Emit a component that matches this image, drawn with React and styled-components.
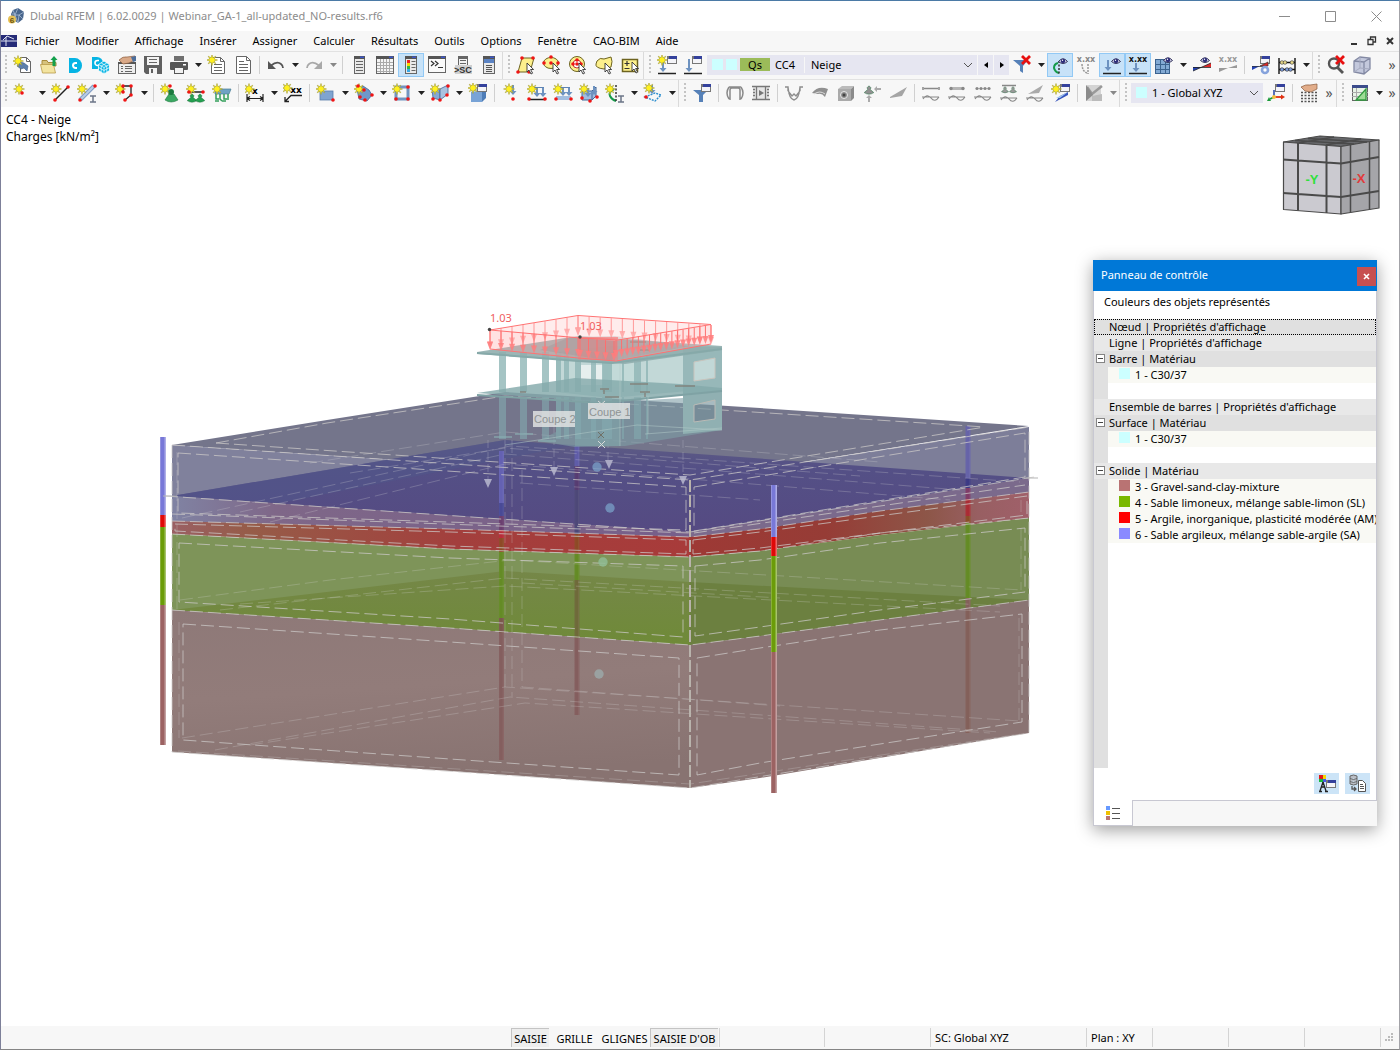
import React, { useState } from "react";
import styled, { createGlobalStyle, css } from "styled-components";

/* ---------- icon parts ---------- */

const Star = ({ x = 5, y = 6 }) => (
  <path
    transform={`translate(${x} ${y})`}
    d="M0-5.500L1-2.200 3.800-3.800 2.200-1 5.500 0 2.200 1 3.800 3.800 1 2.200 0 5.500-1 2.200-3.800 3.800-2.200 1-5.500 0-2.200-1-3.800-3.800-1-2.200z"
    fill="#fff01e"
    stroke="#a39c3c"
    strokeWidth=".6"
  />
);

const Dots = ({ at }) => at.map(([x, y]) => <circle key={`${x}-${y}`} cx={x} cy={y} r="1.8" fill="#f01414" />);

const MiniWindow = ({ x = 10, y = 2 }) => (
  <g>
    <rect x={x + 0.5} y={y + 0.5} width="9" height="7" fill="#f4f4f8" stroke="#777" />
    <rect x={x} y={y} width="10" height="3" fill="#34419c" />
    <rect x={x} y={y} width="2" height="3" fill="#777" />
  </g>
);

const Cursor = ({ x = 11, y = 8 }) => (
  <path transform={`translate(${x} ${y})`} d="M0 0v9l2-2 2 4 1.600-.8-2-3.700h3z" fill="#fff" stroke="#333" strokeWidth=".9" />
);

const Eye = ({ x = 12, y = 5 }) => (
  <g transform={`translate(${x} ${y})`}>
    <path d="M-4.500 .5Q0-5 4.500 .5 0 4.500-4.500 .5z" fill="#c9c9e0" stroke="#33335c" />
    <circle r="2.200" cy="-.1" fill="#2c2c78" />
    <circle r=".7" cy="-.8" cx="-.5" fill="#fff" />
  </g>
);

const RedCross = ({ x = 13, y = 5 }) => (
  <path transform={`translate(${x} ${y})`} d="M-4-4L4 4M4-4L-4 4" stroke="#e81010" strokeWidth="2.800" />
);

const DownArrow = ({ x, y = 3, h = 11, color = "#6d92c0" }) => (
  <path d={`M${x - 1} ${y}h2v${h - 4}h2.500l-3.500 4-3.500-4h2.500z`} fill={color} />
);

const Xxx = ({ color = "#111" }) => (
  <text x="10" y="7" textAnchor="middle" fontSize="8" fontWeight="700" fontFamily="DejaVu Sans, sans-serif" fill={color}>
    x.xx
  </text>
);

const ISection = ({ x = 14, y = 12 }) => <path d={`M${x} ${y}h6M${x} ${y + 6}h6M${x + 3} ${y}v6`} stroke="#6c7688" strokeWidth="1.500" />;

const Wave = ({ y = 15 }) => (
  <path d={`M1 ${y}h17M2 ${y + 2}q4-6 8-1t8-1`} fill="none" stroke="#888" strokeWidth="1.200" />
);

const Support = ({ x, y, s = 1, color = "#24a050" }) => (
  <path transform={`translate(${x} ${y}) scale(${s})`} d="M0-4l2.500 2.500-1 2 4.500 4q-6 4-12 0l4.500-4-1-2z" fill={color} stroke="#1a6b38" strokeWidth=".6" />
);

const ListWindow = ({ x = 5, w = 11, children }) => (
  <g>
    <rect x={x + 0.5} y="1.500" width={w - 1} height="17" fill="#e9e9e9" stroke="#666" />
    <rect x={x} y="1" width={w} height="3" fill="#555" />
    <rect x={x + w - 5} y="1.500" width="4" height="1.500" fill="#3a55c8" />
    {children || <path d={`M${x + 2} 6.500h${w - 4}M${x + 2} 9.500h${w - 4}M${x + 2} 12.500h${w - 4}M${x + 2} 15.500h${w - 4}`} stroke="#666" />}
  </g>
);

const ICONS = {
  newModel: (
    <>
      <path d="M7.500 2.500h6l4 4v11h-10z" fill="#fff" stroke="#666" />
      <path d="M13.500 2.500v4h4" fill="none" stroke="#666" />
      <path d="M4 11q3-5 7-3l4 3-1 5-3-3-3 1z" fill="#5d80ab" stroke="#3f5c84" strokeWidth=".6" />
      <Star />
    </>
  ),
  open: (
    <>
      <path d="M3 5.500h5l1 2h8V11H3z" fill="#d6c27c" stroke="#a98c3c" />
      <path d="M1.500 9.500h13l2 8.500H3.500z" fill="#f3e4a0" stroke="#b79b49" strokeWidth=".8" />
      <path d="M15 1l3.500 4h-2v6h-3V5h-2z" fill="#12a04c" />
    </>
  ),
  dlubal: (
    <>
      <path d="M4 3h6a7 7.500 0 0 1 0 15H4z" fill="#06b4e4" />
      <path d="M12 8h-1.500a2.500 2.500 0 0 0 0 5H12" fill="none" stroke="#fff" strokeWidth="2" />
    </>
  ),
  dlubalBlocks: (
    <>
      <path d="M1 2h5a6 6 0 0 1 0 12H1z" fill="#06b4e4" />
      <path d="M8 5.500H6.500a2.500 2.500 0 0 0 0 5H8" fill="none" stroke="#fff" strokeWidth="1.600" />
      <path d="M13 6l5.500 3.500v6L13 19l-5.500-3.500v-6z" fill="#06b4e4" stroke="#fff" strokeWidth=".8" />
      <path d="M7.500 9.500l5.500 3 5.500-3M13 12.500V19M10.200 8l5.600 3v6M15.800 8l-5.600 3v6M7.500 12.500l5.500 3 5.500-3" fill="none" stroke="#fff" strokeWidth=".7" />
    </>
  ),
  properties: (
    <>
      <rect x="1.500" y="7.500" width="17" height="11" fill="#eee" stroke="#666" />
      <rect x="1" y="7" width="18" height="2" fill="#555" />
      <path d="M4 11.500h2M8 11.500h7M4 13.500h2M8 13.500h7M4 16.500h2M8 16.500h7" stroke="#666" />
      <path d="M2 5q4-4 8-3l8-1v4l-6 3-6 1z" fill="#d9a988" stroke="#8a5b3d" strokeWidth=".7" />
      <path d="M14 2l5-1v5l-3 1z" fill="#4d6f9c" />
    </>
  ),
  save: (
    <>
      <path d="M1 1h18v18H3l-2-2z" fill="#606060" />
      <rect x="4" y="2" width="12" height="8" fill="#f3f3f3" />
      <path d="M6 4.500h8M6 7.500h8" stroke="#666" />
      <rect x="6" y="13" width="8" height="6" fill="#f3f3f3" />
      <rect x="8" y="14" width="2" height="4" fill="#606060" />
    </>
  ),
  print: (
    <>
      <rect x="5" y="1" width="10" height="5" fill="#707070" />
      <rect x="1" y="7" width="18" height="8" rx="1" fill="#565656" />
      <rect x="14" y="9" width="3" height="1.500" fill="#fff" />
      <rect x="5.500" y="12.500" width="9" height="6" fill="#f2f2f2" stroke="#565656" />
    </>
  ),
  newReport: (
    <>
      <path d="M4.500 2.500h9l4 4v12h-13z" fill="#fff" stroke="#666" />
      <path d="M13.500 2.500v4h4M7 9.500h8M7 12.500h8M7 15.500h8" fill="none" stroke="#666" />
      <Star y={5} />
    </>
  ),
  report: (
    <>
      <path d="M3.500 1.500h10l4 4v13h-14z" fill="#fff" stroke="#666" />
      <path d="M13.500 1.500v4h4M6 6.500h5M6 9.500h9M6 12.500h9M6 15.500h9" fill="none" stroke="#666" />
    </>
  ),
  undo: (
    <>
      <path d="M2 6v8h8z" fill="#555" />
      <path d="M5 10.500q6-5 10-1.500 2 1.500 2 4" fill="none" stroke="#555" strokeWidth="1.800" />
    </>
  ),
  redo: (
    <>
      <path d="M18 6v8h-8z" fill="#a9a9a9" />
      <path d="M15 10.500q-6-5-10-1.500-2 1.500-2 4" fill="none" stroke="#a9a9a9" strokeWidth="1.800" />
    </>
  ),
  navigator: <ListWindow />,
  tables: (
    <>
      <rect x="1.500" y="2.500" width="17" height="16" fill="#f5f5f5" stroke="#666" />
      <rect x="1" y="1" width="18" height="3" fill="#555" />
      <rect x="14" y="1.500" width="4" height="1.500" fill="#3a55c8" />
      <path d="M2 7.500h16M2 10.500h16M2 13.500h16M2 16.500h16M5.500 4v14M8.500 4v14M11.500 4v14M14.500 4v14" stroke="#aaa" />
    </>
  ),
  controlPanel: (
    <ListWindow x={4} w={12}>
      <rect x="6" y="5" width="3" height="3" fill="#e22" />
      <rect x="6" y="8" width="3" height="3" fill="#f5d800" />
      <rect x="6" y="11" width="3" height="3" fill="#2fb84a" />
      <rect x="6" y="14" width="3" height="3" fill="#38a9e8" />
      <path d="M10.500 6.500h4M10.500 9.500h4M10.500 12.500h4M10.500 15.500h4" stroke="#666" />
    </ListWindow>
  ),
  console: (
    <>
      <rect x="1.500" y="1.500" width="17" height="16" fill="#fafafa" stroke="#666" />
      <rect x="1" y="1" width="18" height="3" fill="#555" />
      <rect x="14" y="1.500" width="4" height="1.500" fill="#3a55c8" />
      <path d="M4 6l3 2.500-3 2.500M8 6l3 2.500-3 2.500M11 12.500h5" fill="none" stroke="#333" strokeWidth="1.200" />
    </>
  ),
  script: (
    <>
      <path d="M5.500 1.500h9v10h-9z" fill="#f2f2f2" stroke="#666" />
      <path d="M5 1h10v3H5z" fill="#666" />
      <path d="M7 5.500h6M7 8.500h6" stroke="#666" />
      <rect x="2" y="10" width="17" height="9" fill="#d0d0d0" />
      <text x="10" y="18" textAnchor="middle" fontSize="9" fontWeight="700" fontFamily="Liberation Sans, sans-serif" fill="#333">
        &gt;SC
      </text>
    </>
  ),
  manager: (
    <ListWindow x={4} w={12}>
      <rect x="5" y="4" width="10" height="4" fill="#5b83c4" />
      <path d="M7 10.500h6M7 12.500h6M7 14.500h6M7 16.500h6" stroke="#555" />
    </ListWindow>
  ),
  selectQuad: (
    <>
      <path d="M6 3h12l-4 14H2z" fill="#fdf08c" stroke="#6d6320" />
      <Dots at={[[6, 3], [17, 3], [2, 17], [13, 17]]} />
      <Cursor />
    </>
  ),
  selectEllipse: (
    <>
      <ellipse cx="9" cy="8" rx="7.500" ry="5.500" fill="#fdf08c" stroke="#6d6320" />
      <Dots at={[[9, 2], [2, 8], [16, 8], [9, 8]]} />
      <Cursor />
    </>
  ),
  selectRing: (
    <>
      <circle cx="9" cy="9" r="7.500" fill="#fdf08c" stroke="#6d6320" />
      <circle cx="9" cy="9" r="4" fill="#fff" stroke="#b33" />
      <Dots at={[[9, 9], [5, 9], [13, 9], [9, 5]]} />
      <Cursor />
    </>
  ),
  selectLasso: (
    <>
      <path d="M3 6q3-4 7-2l7-2q2 4 0 10l-7 2Q1 13 2 9z" fill="#fdf08c" stroke="#6d6320" />
      <Cursor />
    </>
  ),
  selectPlus: (
    <>
      <rect x="2.500" y="4.500" width="15" height="12" fill="#fdf08c" stroke="#6d6320" strokeWidth="1.500" />
      <path d="M4.500 8.500h5M7 6v5M4.500 13.500h5" stroke="#333" strokeWidth="1.200" />
      <Cursor x={12} y={7} />
    </>
  ),
  newLoad: (
    <>
      <DownArrow x={6} y={5} h={12} />
      <path d="M1 18.500h18" stroke="#222" strokeWidth="1.500" />
      <Star y={5} />
      <MiniWindow x={10} y={1} />
    </>
  ),
  editLoad: (
    <>
      <DownArrow x={6} y={4} h={13} />
      <path d="M1 18.500h18" stroke="#222" strokeWidth="1.500" />
      <MiniWindow x={9} y={1} />
    </>
  ),
  filterOff: (
    <>
      <path d="M1 5h15l-5 6v7l-3-2v-5z" fill="#5681b8" />
      <RedCross x={14} y={5} />
    </>
  ),
  viewSupports: (
    <>
      <path d="M8 8Q4 9 4 13q1 4 5 5" fill="none" stroke="#159a4a" strokeWidth="2" />
      <path d="M9 6v13" stroke="#333" strokeDasharray="2 1.500" strokeWidth="1.500" />
      <Eye x={13} y={6} />
    </>
  ),
  valuesSupports: (
    <>
      <Xxx color="#888" />
      <path d="M6 9q0 7 5 9M12 9v10" fill="none" stroke="#999" strokeWidth="1.500" strokeDasharray="2 1" />
    </>
  ),
  viewLoads: (
    <>
      <DownArrow x={6} y={5} h={11} />
      <path d="M1 18.500h18" stroke="#222" strokeWidth="1.500" />
      <Eye x={14} y={6} />
    </>
  ),
  valuesLoads: (
    <>
      <Xxx />
      <DownArrow x={8} y={8} h={9} />
      <path d="M1 18.500h18" stroke="#222" strokeWidth="1.500" />
    </>
  ),
  viewMesh: (
    <>
      <rect x="1.500" y="4.500" width="14" height="14" fill="#83aad4" stroke="#3c638f" />
      <path d="M6.500 4.500v14M11.500 4.500v14M1.500 9.500h14M1.500 14.500h14" stroke="#3c638f" />
      <Eye x={14} y={5} />
    </>
  ),
  viewResults: (
    <>
      <path d="M1 16l9-4H1z" fill="#2342b5" />
      <path d="M19 8v4h-9z" fill="#e02828" />
      <path d="M1 16L19 8M1 12.500h18" stroke="#222" strokeWidth=".8" />
      <Eye x={13} y={5} />
    </>
  ),
  valuesResults: (
    <>
      <Xxx color="#999" />
      <path d="M1 17l9-4H1zM19 10v3h-9z" fill="#999" />
    </>
  ),
  resultsSettings: (
    <>
      <MiniWindow x={9} y={1} />
      <path d="M1 15v-4h8z" fill="#2342b5" />
      <path d="M1 11.500h11M9 11l8-4v4z" fill="#e02828" stroke="#333" strokeWidth=".7" />
      <circle cx="14" cy="15" r="3" fill="#fff" stroke="#86a3dc" strokeWidth="2.600" />
    </>
  ),
  abacus: (
    <>
      <path d="M2 3v16M18 3v16M2 7.500h16M2 14.500h16" stroke="#111" strokeWidth="1.400" />
      <g fill="#e8d98a" stroke="#333" strokeWidth=".6">
        <circle cx="5" cy="7.500" r="1.800" /><circle cx="8" cy="7.500" r="1.800" /><circle cx="15" cy="7.500" r="1.800" />
      </g>
      <g fill="#7f9fe0" stroke="#222" strokeWidth=".6">
        <circle cx="5" cy="14.500" r="1.800" /><circle cx="10" cy="14.500" r="1.800" /><circle cx="13.500" cy="14.500" r="1.800" />
      </g>
    </>
  ),
  zoomOff: (
    <>
      <circle cx="8" cy="8.500" r="5" fill="none" stroke="#555" strokeWidth="2.400" />
      <path d="M11 12l6 6" stroke="#555" strokeWidth="2.800" />
      <RedCross x={14} y={5} />
    </>
  ),
  cubeView: (
    <>
      <path d="M2 6l6-4 10 1v11l-6 5-10-2z" fill="#c3c8dc" />
      <path d="M2 6l10 1 6-4M12 7v12M2 6l6-4 10 1v11l-6 5-10-2z" fill="none" stroke="#8389a3" strokeWidth="1.300" />
      <path d="M8 2v11l10 1M8 13l-6 4" fill="none" stroke="#a4a9bf" />
    </>
  ),

  node: (<><Star x={6} y={6} /><Dots at={[[9, 10]]} /></>),
  line: (<><path d="M4 17L17 4" stroke="#222" strokeWidth="1.500" /><Star /><Dots at={[[4, 17], [17, 4]]} /></>),
  member: (
    <>
      <path d="M3 17L17 3" stroke="#7f9cc4" strokeWidth="4" />
      <path d="M3 17L17 3" stroke="#b9cde6" strokeWidth="2" />
      <Star /><Dots at={[[3, 17], [18, 3]]} /><ISection x={13} y={13} />
    </>
  ),
  polyline: (<><path d="M8 9V3h8v9l-6 5" fill="none" stroke="#222" strokeWidth="1.300" /><Star /><Dots at={[[8, 3], [16, 3], [8, 9], [16, 12], [10, 17]]} /></>),
  nodeSupport: (<><path d="M9 11h5l4 6q-7 4-13 0z" fill="#3aa862" stroke="#1e7a42" strokeWidth=".6" /><circle cx="11" cy="9" r="3" fill="#1b7a3e" /><Star /><Dots at={[[10, 3]]} /></>),
  lineSupport: (<><path d="M3 9h14" stroke="#222" strokeWidth="1.500" /><Support x={6} y={14} s={0.8} /><Support x={14} y={14} s={0.8} /><Star /><Dots at={[[3, 9], [17, 9]]} /></>),
  surfaceSupport: (
    <>
      <path d="M3 9l5-3h11l-2 5H3z" fill="#6fa3c5" stroke="#4b7f96" strokeWidth=".7" />
      <path d="M4 11v5h3M8 11v5l2 2M12 11v5h3M16 11v6M3 18h4M10 18h4" stroke="#35a05c" strokeWidth="1.500" fill="none" />
      <Star />
    </>
  ),
  dimension: (
    <>
      <path d="M2 11v8M18 11v8M2 15.500h16M2 15.500l3-2M2 15.500l3 2M18 15.500l-3-2M18 15.500l-3 2" stroke="#222" strokeWidth="1.200" />
      <text x="10" y="11" textAnchor="middle" fontSize="9" fontWeight="700" fontFamily="DejaVu Sans, sans-serif">x</text>
      <Star x={4} />
    </>
  ),
  dimensionFree: (
    <>
      <path d="M19 12.500H8l-6 6M2 14v4.500h4" fill="none" stroke="#222" strokeWidth="1.300" />
      <text x="13" y="10" textAnchor="middle" fontSize="9" fontWeight="700" fontFamily="DejaVu Sans, sans-serif">xx</text>
      <Star x={4} y={5} />
    </>
  ),
  surface: (<><rect x="4" y="8" width="13" height="9" fill="#7fa4d0" stroke="#5a7dab" strokeWidth=".8" /><Star /><Dots at={[[17, 17]]} /></>),
  nurbs: (<><path d="M3 6l6-3 6 4 3 5-5 6-8-2z" fill="#6f98cb" stroke="#41669a" strokeWidth=".8" /><Star /><Dots at={[[4, 3], [10, 7], [18, 12], [6, 14], [11, 17]]} /></>),
  opening: (<><rect x="4" y="4" width="12" height="12" fill="none" stroke="#7394c0" strokeWidth="3" /><Star /><Dots at={[[4, 16], [16, 16], [16, 4]]} /></>),
  solid: (
    <>
      <path d="M2 6h8v11l-7-2z" fill="#85a9d5" stroke="#41669a" strokeWidth=".8" />
      <path d="M10 6l8-4v9l-8 6z" fill="#a9c2e0" stroke="#41669a" strokeWidth=".8" />
      <Star /><Dots at={[[18, 3], [3, 16], [10, 17], [17, 12]]} />
    </>
  ),
  block: (<><path d="M3 9h11v10H3z" fill="#78a3d6" /><path d="M3 9l3-3h12l-4 3z" fill="#a7c6ea" /><path d="M14 9l4-3v9l-4 4z" fill="#4e7db8" /><Star y={5} /><MiniWindow x={9} y={1} /></>),
  loadNode: (<><DownArrow x={12} y={2} h={10} /><Star x={8} y={6} /><Dots at={[[12, 16]]} /></>),
  loadLine: (<><DownArrow x={10} y={4} h={10} /><DownArrow x={16} y={4} h={10} /><path d="M4 4.500h13" stroke="#5d83b4" /><path d="M2 16.500h16" stroke="#222" strokeWidth="1.500" /><Star /><Dots at={[[2, 16], [18, 16]]} /></>),
  loadSurface: (<><rect x="3" y="13" width="15" height="4" fill="#a3bee0" /><DownArrow x={10} y={4} h={9} /><DownArrow x={16} y={4} h={9} /><path d="M3 4.500h14" stroke="#5d83b4" /><Star /><Dots at={[[3, 16], [18, 16]]} /></>),
  loadSolid: (<><path d="M3 8h10v9H3zM13 8l4-4v9l-4 4" fill="#9fbde0" stroke="#41669a" /><DownArrow x={9} y={5} h={9} /><DownArrow x={15} y={3} h={9} /><Star /><Dots at={[[3, 15], [11, 18], [18, 14]]} /></>),
  hinge: (
    <>
      <path d="M9 6Q3 9 5 13q2 4 6 5" fill="none" stroke="#159a4a" strokeWidth="2" />
      <path d="M11 2v16" stroke="#333" strokeWidth="1.500" strokeDasharray="2 1.500" />
      <Star /><ISection x={13} y={13} />
    </>
  ),
  freeLoad: (
    <>
      <path d="M2 14l10-4 6 2-6 6z" fill="none" stroke="#2f90d0" strokeDasharray="2 1" strokeWidth="1.400" />
      <DownArrow x={9} y={2} h={9} /><Star x={6} y={5} /><Dots at={[[3, 14]]} />
    </>
  ),
  filter: (<><path d="M1 7h15l-5 5v7H7v-7z" fill="#5681b8" /><MiniWindow x={9} y={1} /></>),
  deform: <path d="M5 17V7q0-2 2-2h6q2 0 2 2v10M4 4h12M4 4q-4 6 0 12M16 4q4 6 0 12" fill="none" stroke="#8a8a8a" strokeWidth="1.500" />,
  film: (
    <>
      <path d="M2 3h16v14H2z" fill="#e6e6e6" />
      <path d="M5.500 3v14M14.500 3v14M1 3.500h18M1 16.500h18M2 6.500h2M2 9.500h2M2 12.500h2M16 6.500h2M16 9.500h2M16 12.500h2" stroke="#777" strokeWidth="1.300" />
      <path d="M8 7l5 3-5 3z" fill="#777" />
    </>
  ),
  diagram: <path d="M1 4h3v4M16 8V4h3M4 4q1 12 6 13 5-1 6-13M4 8l4 5 2-2 2 2 4-5" fill="none" stroke="#8d8d8d" strokeWidth="1.400" />,
  diagramSurface: (<><path d="M2 10q6-8 16-4l-3 8q-3-4-7-3z" fill="#909090" /><path d="M4 11q6-4 11 0" stroke="#ddd" fill="none" /></>),
  diagramSolid: (<><path d="M2 6l4-3h12l-3 3z" fill="#bbb" /><path d="M2 6h13v12H2z" fill="#aaa" /><path d="M15 6l3-3v12l-3 3z" fill="#8a8a8a" /><circle cx="8" cy="12" r="3.500" fill="#888" stroke="#e8e8e8" /><circle cx="8" cy="12" r="1.500" fill="#444" /></>),
  reactions: (<><Support x={7} y={6} s={0.8} color="#909090" /><path d="M6 19v-4H4l3-3 3 3H8v4z" fill="#aaa" /><path d="M19 5h-4V3l-3 3 3 3V7h4z" fill="#aaa" /></>),
  stress: <path d="M2 14L19 4l-5 9-12 2z" fill="#a5a5a5" />,
  resMember: (<><path d="M3 5.500h14M2 4v3M18 4v3" stroke="#888" strokeWidth="1.500" /><Wave y={14} /></>),
  resSurface: (<><rect x="3" y="4" width="14" height="3" fill="#b5b5b5" /><circle cx="4" cy="5.500" r="1.700" fill="#888" /><circle cx="16" cy="5.500" r="1.700" fill="#888" /><Wave y={14} /></>),
  resLine: (<><path d="M3 5.500h14" stroke="#ccc" />{[4, 8, 12, 16].map(x => <circle key={x} cx={x} cy="5.500" r="1.600" fill="#888" />)}<Wave y={14} /></>),
  resSupport: (<><path d="M3 2.500h14" stroke="#888" strokeWidth="1.500" /><Support x={6} y={6} s={0.6} color="#999" /><Support x={14} y={6} s={0.6} color="#999" /><Wave y={15} /></>),
  resSection: (<><path d="M3 11L18 2l-4 8z" fill="#aaa" /><Wave y={15} /></>),
  newResult: (<><path d="M4 19l13-7v-3L9 13z" fill="#3553bd" /><path d="M5 15l12-6-8 6z" fill="#9fc5ee" /><MiniWindow x={9} y={1} /><Star /></>),
  combine: (<><rect x="2" y="2" width="15" height="16" fill="#d4d4d4" /><path d="M8 13l10-2v7H8z" fill="#bbb" /><path d="M3 4l5 7L18 3" fill="none" stroke="#999" strokeWidth="2.500" /><path d="M2 2v16l7-6z" fill="#8b8b8b" /></>),
  axes: (
    <>
      <MiniWindow x={9} y={1} />
      <path d="M8 14V7" stroke="#4560b0" strokeWidth="1.800" />
      <path d="M8 14h8" stroke="#e03010" strokeWidth="1.800" />
      <path d="M15 11.500l4 2.500-4 2.500z" fill="#e03010" />
      <path d="M8 14l-4 2" stroke="#1a9a3a" strokeWidth="1.800" />
      <path d="M1 18l2-4 2 4z" fill="#1a9a3a" />
      <circle cx="8" cy="14" r="2" fill="#f3c040" />
    </>
  ),
  gridHand: (
    <>
      <path d="M2 9.500h16M2 12.500h16M2 15.500h16M2 18.500h16" stroke="#555" strokeDasharray="2 1.500" strokeWidth="1.500" />
      <path d="M2 4q5-3 9-2l7-1v5l-6 3-6-1z" fill="#e2ad8a" stroke="#8a5b3d" strokeWidth=".7" />
    </>
  ),
  worksheet: (
    <>
      <rect x="2.500" y="2.500" width="15" height="15" fill="#e8f3e6" stroke="#666" />
      <rect x="2" y="2" width="16" height="3" fill="#3c4c8c" />
      <path d="M2 9.500h16M2 13.500h16M6.500 5v12" stroke="#aaa" />
      <path d="M16 6v11H6z" fill="#9ddc96" stroke="#2f9a3e" strokeWidth="1.300" />
    </>
  ),
  colorSettings: (
    <>
      <rect x="2" y="1" width="4" height="4" fill="#e01818" /><rect x="6" y="1" width="3" height="4" fill="#f5d800" />
      <rect x="2" y="5" width="4" height="3" fill="#15b93a" /><rect x="6" y="5" width="3" height="3" fill="#4a56e8" />
      <path d="M6 8L3 17M6 8l3 9M4 13h4M2 17.500h3M8 17.500h3" stroke="#222" strokeWidth="1.300" />
      <MiniWindow x={9} y={6} />
    </>
  ),
  exportColors: (
    <>
      <path d="M2 2q3.500-2 7 0v8q-3.500 2-7 0zM2 4.500q3.500 2 7 0M2 7.500q3.500 2 7 0" fill="#b9bec6" stroke="#666" />
      <path d="M4 12v3h4M6 13l2 2-2 2" fill="none" stroke="#555" strokeWidth="1.300" />
      <path d="M10.500 6.500h4l3 3v8h-7z" fill="#fff" stroke="#555" />
      <path d="M12 10.500h3M12 12.500h4M12 14.500h4" stroke="#555" />
    </>
  ),
};

/* ---------- toolbar contents ---------- */
// "|" is a separator, "v" a menu arrow, a name ending in "*" is switched on

const MAIN_BARS = [
  ["newModel", "open", "dlubal", "dlubalBlocks", "properties", "save", "print", "v", "newReport", "report", "|", "undo", "v", "redo", "v-", "|", "navigator", "tables", "controlPanel*", "console", "script", "manager"],
  ["selectQuad", "selectEllipse", "selectRing", "selectLasso", "selectPlus"],
  ["newLoad", "editLoad", "loadCase", "filterOff", "v", "viewSupports*", "valuesSupports", "viewLoads*", "valuesLoads*", "viewMesh", "v", "viewResults", "valuesResults", "|", "resultsSettings", "abacus", "v"],
  ["zoomOff", "cubeView", "more"],
];

const INSERT_BARS = [
  ["node", "v", "line", "member", "v", "polyline", "v", "|", "nodeSupport", "lineSupport", "surfaceSupport", "|", "dimension", "v", "dimensionFree", "|", "surface", "v", "nurbs", "v", "opening", "v", "solid", "v", "block", "|", "loadNode", "loadLine", "loadSurface", "loadSolid", "hinge", "v", "freeLoad", "v"],
  ["filter", "|", "deform", "film", "|", "diagram", "diagramSurface", "diagramSolid", "reactions", "stress", "|", "resMember", "resSurface", "resLine", "resSupport", "resSection", "newResult", "|", "combine", "v-"],
  ["coordinates", "axes", "|", "gridHand", "more"],
  ["worksheet", "v", "more"],
];

const MENUS = ["Fichier", "Modifier", "Affichage", "Insérer", "Assigner", "Calculer", "Résultats", "Outils", "Options", "Fenêtre", "CAO-BIM", "Aide"];

function Icon({ name }) {
  return (
    <svg width="20" height="20" viewBox="0 0 20 20" aria-hidden="true">
      {ICONS[name]}
    </svg>
  );
}

const Chevron = () => (
  <ChevronSvg width="10" height="6" viewBox="0 0 10 6" aria-hidden="true">
    <path d="M1 1l4 4 4-4" fill="none" stroke="#555" />
  </ChevronSvg>
);

function LoadCase() {
  return (
    <>
      <Combo $width={270}>
        <Swatch $color="#ccffff" />
        <Swatch $color="#ccffff" />
        <ActionTag>Qs</ActionTag>
        <CaseNumber>CC4</CaseNumber>
        <ComboSelect aria-label="Cas de charge" defaultValue="Neige">
          <option>Neige</option>
        </ComboSelect>
        <Chevron />
      </Combo>
      <StepButton aria-label="Précédent">
        <svg width="4" height="6" viewBox="0 0 4 6"><path d="M4 0v6L0 3z" /></svg>
      </StepButton>
      <StepButton aria-label="Suivant">
        <svg width="4" height="6" viewBox="0 0 4 6"><path d="M0 0v6l4-3z" /></svg>
      </StepButton>
    </>
  );
}

function Coordinates() {
  return (
    <Combo $width={132}>
      <Swatch $color="#ccffff" />
      <ComboSelect aria-label="Système de coordonnées" defaultValue="1 - Global XYZ">
        <option>1 - Global XYZ</option>
      </ComboSelect>
      <Chevron />
    </Combo>
  );
}

function Tool({ item }) {
  if (item === "|") return <Separator />;
  if (item === "loadCase") return <LoadCase />;
  if (item === "coordinates") return <Coordinates />;
  if (item === "more") return <MoreButton aria-label="Plus">»</MoreButton>;
  if (item === "v" || item === "v-") {
    return (
      <ArrowButton aria-label="Menu">
        <svg width="7" height="4" viewBox="0 0 7 4"><path d="M0 0h7L3.500 4z" fill={item === "v-" ? "#888" : "#222"} /></svg>
      </ArrowButton>
    );
  }
  const active = item.endsWith("*");
  const name = item.replace("*", "");
  return (
    <ToolButton aria-label={name} aria-pressed={active} $active={active}>
      <Icon name={name} />
    </ToolButton>
  );
}

function Toolbar({ bars }) {
  return (
    <ToolbarRow role="toolbar">
      {bars.map((bar, i) => (
        <ToolGroup key={i} $last={i === bars.length - 1}>
          <Grip />
          {bar.map((item, j) => <Tool key={j} item={item} />)}
        </ToolGroup>
      ))}
    </ToolbarRow>
  );
}

/* ---------- model view ---------- */

const BRIGHT = { b: "#7878d8", r: "#e00808", g: "#6b9c08", m: "#9c6262" };

// x, then [colour, from, to] from the top down
const PILES_BACK = [
  [501.5, [["#6461b2", 451, 503], ["#494a96", 503, 516], ["#6b3f70", 516, 530], ["#b82c38", 530, 538], ["#8e4a26", 538, 552], ["#648b25", 552, 618], ["#7b584c", 618, 633], ["#845e5e", 633, 760]]],
  [577, [["#5f5ca8", 446, 466], ["#573c72", 466, 490], ["#4d4878", 490, 534], ["#8e4a26", 534, 554], ["#648b25", 554, 580], ["#6f6a3a", 580, 638], ["#845e5e", 638, 715]]],
  [968, [["#6663a8", 426, 478], ["#3c3a85", 478, 488], ["#7f3c68", 488, 499], ["#aa2c34", 499, 516], ["#8b4e28", 516, 523], ["#648b25", 523, 598], ["#83605a", 598, 733]]],
];

const PILES_FRONT = [
  [163, [[BRIGHT.b, 437, 515], [BRIGHT.r, 515, 527], [BRIGHT.g, 527, 605], [BRIGHT.m, 605, 745]]],
  [774, [[BRIGHT.b, 485, 537], [BRIGHT.r, 537, 556], [BRIGHT.g, 556, 652], [BRIGHT.m, 652, 793]]],
];

const Pile = ({ x, parts, wide, shine }) => {
  const top = parts[0][1];
  const height = parts[parts.length - 1][2] - top;
  return (
    <g>
      {parts.map(([color, from, to]) => (
        <rect key={from} x={x - wide / 2} y={from} width={wide} height={to - from} fill={color} />
      ))}
      <rect x={x + wide / 2 - 1.5} y={top} width="1.500" height={height} fill="#fff" opacity={shine} />
      <rect x={x - wide / 2} y={top} width="1" height={height} fill="#fff" opacity={shine / 2} />
    </g>
  );
};

const mix = (a, b, t) => [a[0] + (b[0] - a[0]) * t, a[1] + (b[1] - a[1]) * t];

// load arrows standing on one edge of the roof
function LoadEdge({ a, b, count, drop }) {
  return Array.from({ length: count + 1 }, (_, i) => {
    const [x, y] = mix(a, b, i / count);
    return (
      <g key={i}>
        <path d={`M${x} ${y}V${y + drop - 6}`} stroke="#ff6e6e" strokeWidth="1" />
        <path d={`M${x - 3} ${y + drop - 8}h6l-3 8z`} fill="#ff7c7c" fillOpacity=".85" />
      </g>
    );
  });
}

const FRONT_DASHES = [
  "M172 445L690 480 1029 427", "M178 453L686 487V530L178 513z", "M694 487L1025 433V477L694 531z",
  "M216 443L327 423 505 396 985 427M216 443L690 475 985 427",
  "M165 496L690 532 1034 477",
  "M172 514L690 533", "M694 533L1025 485",
  "M172 521L450 529 690 537 760 529 880 511 1029 492",
  "M175 524L450 532 686 540V554L450 546 175 531z", "M693 540L760 532 1027 496V515L880 533 760 548 693 554z",
  "M172 534L450 549 690 557 760 551 880 533 1029 518",
  "M179 543L450 558 683 566V637L450 619 179 602z", "M695 566L760 560 880 543 1025 528V592L880 610 760 627 695 636z",
  "M172 610L450 628 690 645 760 636 1029 600",
  "M183 624L450 642 679 658V775L450 759 183 740z", "M697 658L760 648 880 630 1022 614V722L880 744 760 763 697 775z",
  "M172 445V752L690 788 1029 733V427",
];

const HIDDEN_DASHES = [
  "M177 452V612M179 622V738", "M182 518L510 446 1020 482", "M240 512L505 454 960 490", "M270 522L505 464 950 500",
  "M180 600L330 580 510 560 1022 590", "M220 610L505 578 1000 606", "M240 604L505 586 1000 612",
  "M182 738L505 687 1020 721", "M215 750L510 697 1000 732", "M250 745L525 703 990 733",
  "M522 470V687L780 706M512 440V698", "M520 483L760 500", "M522 583L780 598", "M505 440V690",
  "M1021 500V512M1021 528V590M1019 618V720", "M178 751L690 784 1020 734",
  "M310 463L505 432 880 462", "M350 473L505 448 860 476",
];

const COLUMNS = [[499, 7], [520, 7], [542, 7], [556, 5], [564, 5], [575, 6], [591, 5], [602, 10], [622, 2], [634, 7], [646, 2]];

function Building() {
  return (
    <g>
      {/* rear walls and ground floor seen through the slabs */}
      <path d="M556 352L610 346 722 348V388L610 398 556 392z" fill="#b7d1d0" opacity=".85" />
      <path d="M581 365h22v20h-22z" fill="#e6efee" />
      <path d="M608 366l29-3v22l-29 3z" fill="#c2dad8" />
      <path d="M556 398L610 402 683 398 722 394V430L625 446 575 447 538 441 556 432z" fill="#7f9ea6" opacity=".6" />
      <path d="M575 402h45v44h-45z" fill="#7fa3a8" opacity=".6" />
      {COLUMNS.map(([x, w]) => (
        <g key={x} fill="#8fb6b6" opacity=".8">
          <rect x={x} y="352" width={w} height="40" />
          <rect x={x} y="397" width={w} height="42" fill="#84abb0" opacity=".75" />
        </g>
      ))}
      <path d="M494 437h18M515 434h18M538 441h18" stroke="#8aaeb2" strokeWidth="2" opacity=".6" />
      {/* outer wall with its two windows */}
      <path fillRule="evenodd" d="M683 346L722 347V430L683 434zM694 362L715 358V378L694 381zM694 405L715 400V419L694 422z" fill="#97b8b9" />
      <path d="M694 362L715 358V378L694 381zM694 405L715 400V419L694 422z" fill="none" stroke="#c8c4bd" />
      <path d="M683 396L722 391V430L683 434z" fill="#6d8590" opacity=".15" />
      {/* slabs */}
      <path d="M477 393L575 378 680 384 722 388V391L620 401 600 402z" fill="#84a9ab" opacity=".82" />
      <path d="M477 395L600 403 722 391" fill="none" stroke="#7fa2a4" strokeWidth="2" />
      <path d="M477 352L578 336 722 346V350L625 364 578 361 477 354z" fill="#90aeae" opacity=".9" />
      <path d="M477 353L578 361 612 363 722 349" fill="none" stroke="#86a9a9" strokeWidth="2" />
      <path d="M570 337L615 336 690 346 612 361 540 350z" fill="#7d9293" opacity=".4" />
      <path d="M505 445L637 425 722 430M620 446V364M648 434V396M645 434L722 428" fill="none" stroke="#b4ccca" opacity=".5" />
      <path d="M520 392h6M600 389h9M604 389v5M640 392h10M645 392v5M675 386h20M630 384h18M630 342h16M640 350h10M605 397h14" stroke="#7f756c" strokeWidth="2" opacity=".55" />
    </g>
  );
}

function Scene() {
  return (
    <SceneSvg viewBox="1 107 1398 919" role="img" aria-label="Modèle">
      <defs>
        <linearGradient id="water" x1="0" y1="0" x2="0" y2="1">
          <stop offset="0" stopColor="#5f5d84" /><stop offset=".3" stopColor="#545086" /><stop offset="1" stopColor="#554a82" />
        </linearGradient>
        <linearGradient id="clay"><stop offset="0" stopColor="#9a6064" /><stop offset=".15" stopColor="#965c48" /><stop offset=".55" stopColor="#a33f3d" /><stop offset="1" stopColor="#a83b3a" /></linearGradient>
        <linearGradient id="clayRight"><stop offset="0" stopColor="#9e3935" /><stop offset=".4" stopColor="#963c36" /><stop offset=".7" stopColor="#8d5648" /><stop offset=".85" stopColor="#985f62" /><stop offset="1" stopColor="#a0606a" /></linearGradient>
        <linearGradient id="silt"><stop offset="0" stopColor="#8083a3" /><stop offset=".2" stopColor="#7f6788" /><stop offset="1" stopColor="#765f8a" /></linearGradient>
        <linearGradient id="loamLow" x1="0" y1="0" x2="0" y2="1"><stop offset="0" stopColor="#758748" /><stop offset="1" stopColor="#6f8a38" /></linearGradient>
        <linearGradient id="gravel" x1="0" y1="0" x2=".2" y2="1"><stop offset="0" stopColor="#8e7978" /><stop offset=".5" stopColor="#927c7a" /><stop offset="1" stopColor="#887371" /></linearGradient>
      </defs>

      {/* soil layers */}
      <path d="M172 445L327 420 505 392 760 408 1029 426 690 480z" fill="#74758b" />
      <path d="M172 445L690 480V537L450 529 172 521z" fill="#80819c" />
      <path d="M690 480L1029 427V492L760 529 690 537z" fill="#7d7e99" />
      <path d="M172 496L505 440 1029 478 690 532z" fill="url(#water)" />
      <path d="M172 496L505 440 570 446 280 503z" fill="#52568a" opacity=".6" />
      <path d="M172 496L690 532V537L450 529 172 521z" fill="url(#silt)" />
      <path d="M690 532L1029 478V492L760 529 690 537z" fill="#7b6a8c" />
      <path d="M172 521L450 529 690 537V557L450 549 172 534z" fill="url(#clay)" />
      <path d="M690 537L760 529 880 511 1029 492V518L880 535 760 551 690 557z" fill="url(#clayRight)" />
      <path d="M172 534L450 549 690 557V645L450 628 172 610z" fill="#7e9459" />
      <path d="M690 557L760 551 880 535 1029 518V600L760 636 690 645z" fill="#788c54" />
      <path d="M172 610L505 571 690 582V645L450 628z" fill="url(#loamLow)" />
      <path d="M690 582L1029 600 760 636 690 645z" fill="#6c8040" />
      <path d="M172 610L450 628 690 645V788L450 771 172 752z" fill="url(#gravel)" />
      <path d="M690 645L760 636 1029 600V733L760 778 690 788z" fill="#8a7473" />

      {PILES_BACK.map(([x, parts]) => <Pile key={x} x={x} parts={parts} wide={5} shine={0.05} />)}

      <g fill="none" stroke="#d8d8d8" strokeOpacity=".25" strokeDasharray="13 5">
        {HIDDEN_DASHES.map(d => <path key={d} d={d} />)}
      </g>
      <g fill="none" stroke="#cccac8" strokeOpacity=".75" strokeDasharray="13 5">
        {FRONT_DASHES.map(d => <path key={d} d={d} />)}
      </g>
      <path d="M690 480V788" stroke="#b9b3ac" strokeWidth="2" strokeDasharray="12 3" />
      <path d="M488 440V482M554 425V470M608 440V463M683 440V480" stroke="#c0c0cc" strokeOpacity=".3" strokeDasharray="8 4" />

      {PILES_FRONT.map(([x, parts]) => <Pile key={x} x={x} parts={parts} wide={6} shine={0.4} />)}

      <Building />

      {/* snow load */}
      <path d="M490 330L578 316 711 325 615 341z" fill="#ffdada" fillOpacity=".5" />
      <path d="M490 330L580 337 615 340 615 361 578 358 490 349z" fill="#ff9a9a" fillOpacity=".3" />
      <path d="M615 340L711 325V344L615 361z" fill="#ffb0b0" fillOpacity=".35" />
      <path d="M578 337h40v23h-40z" fill="#ff7474" fillOpacity=".3" />
      <g opacity=".65">
        <LoadEdge a={[490, 330]} b={[578, 316]} count={8} drop={19} />
        <LoadEdge a={[578, 316]} b={[711, 325]} count={12} drop={20} />
      </g>
      <LoadEdge a={[490, 330]} b={[578, 337]} count={8} drop={20} />
      <LoadEdge a={[580, 338]} b={[614, 341]} count={4} drop={20} />
      <LoadEdge a={[616, 340]} b={[711, 325]} count={17} drop={18} />
      <path d="M490 330L578 315.500 711 324.500 618 340 580 338zM490 349L578 358 616 361 711 344M578 338h40" fill="none" stroke="#ff7272" />
      <circle cx="489.500" cy="329.500" r="1.700" fill="#444" />
      <circle cx="580" cy="337" r="1.700" fill="#444" />
      <ValueText x="490" y="322">1.03</ValueText>
      <ValueText x="580" y="330">1.03</ValueText>

      {/* section markers */}
      <rect x="533" y="411" width="42" height="16" fill="#dfe2e2" fillOpacity=".85" />
      <rect x="588" y="403" width="42" height="16" fill="#dfe2e2" fillOpacity=".85" />
      <SectionText x="534" y="423">Coupe 2</SectionText>
      <SectionText x="589" y="416">Coupe 1</SectionText>
      {[[488, 479], [554, 467], [609, 460], [683, 476]].map(([x, y]) => (
        <path key={x} d={`M${x - 4} ${y}h8l-4 9z`} fill="#b9b9cf" fillOpacity=".85" />
      ))}
      {[[597, 467, "#7596c0"], [610, 508, "#7596c0"], [603, 562, "#8fbb93"], [599, 674, "#9ba8a8"]].map(([x, y, fill]) => (
        <circle key={y} cx={x} cy={y} r="4.700" fill={fill} fillOpacity=".85" />
      ))}
      <path d="M598 441l7 7M605 441l-7 7M598 401l7 6M605 401l-7 6" stroke="#d9dada" />
      <path d="M598 432l6 6M604 432l-6 6" stroke="#6f7066" />
      <path d="M163 496h14M1022 478h16" stroke="#b5b5b5" />
    </SceneSvg>
  );
}

function NavigationCube() {
  return (
    <CubeSvg width="100" height="84" viewBox="1281 133 100 84" role="img" aria-label="Cube de navigation">
      <g stroke="#4a4a4a" strokeWidth="1.200" strokeLinejoin="round">
        <path d="M1283.500 142L1320 136 1379 140 1341 146.500z" fill="#68696c" />
        <path d="M1283.500 142L1341 146.500V214L1283.500 209.500z" fill="#cbcad0" />
        <path d="M1341 146.500L1379 140V208L1341 214z" fill="#a5a5a9" />
        <path d="M1295 140.500L1354 144M1308 138.500L1367 142M1299 143L1334 137M1326 145L1361 139" strokeWidth="1.500" />
        <path d="M1298 143V210.500M1326.500 145V213M1283 159.500L1341 163.500 1379 157M1283 193L1341 197 1379 191" fill="none" strokeWidth="2" />
        <path d="M1350.500 145V212.500M1369.500 142V210" strokeWidth="1.500" />
      </g>
      <CubeText x="1312" y="184" fill="#2fe03c">-Y</CubeText>
      <CubeText x="1359" y="183" fill="#e23b3b">-X</CubeText>
    </CubeSvg>
  );
}

/* ---------- control panel ---------- */

const TREE = [
  { label: "Nœud | Propriétés d'affichage", selected: true },
  { label: "Ligne | Propriétés d'affichage", light: true },
  { label: "Barre | Matériau", items: [["#ccffff", "1 - C30/37"]], gap: true },
  { label: "Ensemble de barres | Propriétés d'affichage", light: true },
  { label: "Surface | Matériau", items: [["#ccffff", "1 - C30/37"]], gap: true },
  {
    label: "Solide | Matériau",
    light: true,
    items: [
      ["#b97373", "3 - Gravel-sand-clay-mixture"],
      ["#7ab800", "4 - Sable limoneux, mélange sable-limon (SL)"],
      ["#ff0000", "5 - Argile, inorganique, plasticité modérée (AM)"],
      ["#8a8aff", "6 - Sable argileux, mélange sable-argile (SA)"],
    ],
  },
];

function TreeSection({ section }) {
  const [open, setOpen] = useState(true);
  return (
    <li>
      <TreeHead $light={section.light} $selected={section.selected}>
        {section.items && (
          <Expander aria-label={section.label} aria-expanded={open} onClick={() => setOpen(!open)}>
            <svg width="9" height="9" viewBox="0 0 9 9">
              <path d={open ? "M2 4.500h5" : "M2 4.500h5M4.500 2v5"} stroke="#444" />
            </svg>
          </Expander>
        )}
        {section.label}
      </TreeHead>
      {section.items && open && (
        <TreeItems $gap={section.gap}>
          {section.items.map(([color, text]) => (
            <TreeItem key={text}><TreeSwatch $color={color} />{text}</TreeItem>
          ))}
        </TreeItems>
      )}
    </li>
  );
}

function ControlPanel() {
  return (
    <Panel>
      <PanelHeader>
        <PanelTitle>Panneau de contrôle</PanelTitle>
        <PanelClose aria-label="Fermer">
          <svg width="7" height="7" viewBox="0 0 7 7"><path d="M1 1l5 5M6 1L1 6" stroke="#fff" strokeWidth="1.600" /></svg>
        </PanelClose>
      </PanelHeader>
      <PanelBody>
        <PanelCaption>Couleurs des objets représentés</PanelCaption>
        <Tree>
          {TREE.map(section => <TreeSection key={section.label} section={section} />)}
        </Tree>
        <PanelActions>
          <PanelAction aria-label="Couleurs"><Icon name="colorSettings" /></PanelAction>
          <PanelAction aria-label="Exporter"><Icon name="exportColors" /></PanelAction>
        </PanelActions>
      </PanelBody>
      <PanelTabs>
        <PanelTab aria-label="Légende">
          <svg width="16" height="14" viewBox="0 0 16 14">
            <path d="M1 0h4v4H1z" fill="#6699ff" /><path d="M1 5h4v4H1z" fill="#f0c000" /><path d="M1 10h4v4H1z" fill="#b97373" />
            <path d="M7 2.500h8M7 7.500h8M7 12.500h8" stroke="#555" />
          </svg>
        </PanelTab>
        <TabFill />
      </PanelTabs>
    </Panel>
  );
}

/* ---------- window ---------- */

function App() {
  return (
    <>
      <GlobalStyle />
      <Window>
        <TitleBar>
          <svg width="16" height="16" viewBox="0 0 16 16" aria-hidden="true">
            <path d="M5 2l5-2 6 4-1 7-5 4-6-4-1-5z" fill="#47658c" />
            <path d="M5 2l2 5-1 5M10 0l-3 7 3 8M16 4l-5 3M7 7h4l4 4M4 6h3M11 7l-1 8" fill="none" stroke="#a9bdd6" strokeWidth=".8" />
            <circle cx="4" cy="11.500" r="4" fill="#e5c057" />
            <text x="4" y="14.500" textAnchor="middle" fontSize="8" fontWeight="700" fontFamily="Liberation Sans, sans-serif" fill="#6b5312">6</text>
          </svg>
          <Title>Dlubal RFEM | 6.02.0029 | Webinar_GA-1_all-updated_NO-results.rf6</Title>
          <WindowButton aria-label="Réduire"><svg width="11" height="11" viewBox="0 0 11 11"><path d="M0 5.500h11" /></svg></WindowButton>
          <WindowButton aria-label="Agrandir"><svg width="11" height="11" viewBox="0 0 11 11"><path d="M.5.500h10v10H.5z" /></svg></WindowButton>
          <WindowButton aria-label="Fermer"><svg width="11" height="11" viewBox="0 0 11 11"><path d="M.5.500l10 10M10.500.500l-10 10" /></svg></WindowButton>
        </TitleBar>
        <MenuBar>
          <svg width="16" height="12" viewBox="0 0 16 12" aria-hidden="true">
            <rect width="16" height="12" fill="#252b78" />
            <path d="M0 6h16M2 5l4-4 7 3M5 2v9" fill="none" stroke="#dfe3f2" />
          </svg>
          {MENUS.map(menu => <MenuButton key={menu}>{menu}</MenuButton>)}
          <MenuSpace />
          <ChildButton aria-label="Réduire le document"><svg width="10" height="10" viewBox="0 0 10 10"><path d="M2 8h6" strokeWidth="2" /></svg></ChildButton>
          <ChildButton aria-label="Restaurer le document"><svg width="10" height="10" viewBox="0 0 10 10"><path d="M1 3.500h5v5H1zM3.500 3.500v-2.500h5v5H6" strokeWidth="1.300" /></svg></ChildButton>
          <ChildButton aria-label="Fermer le document"><svg width="10" height="10" viewBox="0 0 10 10"><path d="M2 2l6 6M8 2L2 8" strokeWidth="2" /></svg></ChildButton>
        </MenuBar>
        <Toolbar bars={MAIN_BARS} />
        <Toolbar bars={INSERT_BARS} />
        <Viewport>
          <Scene />
          <ViewCaption>CC4 - Neige<br />Charges [kN/m²]</ViewCaption>
          <ViewOverlay>
            <NavigationCube />
            <ControlPanel />
          </ViewOverlay>
        </Viewport>
        <StatusBar>
          <StatusToggle $width={38} $on>SAISIE</StatusToggle>
          <StatusToggle $width={48}>GRILLE</StatusToggle>
          <StatusToggle $width={50}>GLIGNES</StatusToggle>
          <StatusToggle $width={68} $on>SAISIE D'OB</StatusToggle>
          <StatusCell $width={105} />
          <StatusCell $width={106} />
          <StatusCell $width={156}>SC: Global XYZ</StatusCell>
          <StatusCell $width={66}>Plan : XY</StatusCell>
          <StatusCell $width={76} />
          <StatusCell $width={76} />
          <StatusCell $width={76} />
          <StatusCell $width={19}>
            <svg width="9" height="9" viewBox="0 0 9 9"><path d="M6 0h2v2H6zM3 3h2v2H3zM6 3h2v2H6zM0 6h2v2H0zM3 6h2v2H3zM6 6h2v2H6z" fill="#bbb" /></svg>
          </StatusCell>
        </StatusBar>
      </Window>
    </>
  );
}

const GlobalStyle = createGlobalStyle`
  * {
    box-sizing: border-box;
  }

  body {
    margin: 0;
    font-family: "Noto Sans", "Open Sans", sans-serif;
    font-size: 11px;
    color: #000;
    background: #fff;
  }

  button, select {
    font: inherit;
    color: inherit;
    background: none;
    border: none;
    padding: 0;
    margin: 0;
  }

  svg {
    flex: none;
    display: block;
  }
`;

const Window = styled.div`
  display: flex;
  flex-direction: column;
  min-height: 100vh;
  border: 1px solid;
  border-color: #4b7aa6 #a3a3a8 #858585 #7d8099;
`;

const TitleBar = styled.header`
  display: flex;
  align-items: center;
  height: 30px;
  padding-left: 7px;
`;

const Title = styled.span`
  flex: 1;
  padding: 0 0 2px 6px;
  color: #8c8c8c;
`;

const WindowButton = styled.button`
  display: flex;
  align-items: center;
  justify-content: center;
  width: 46px;
  height: 28px;
  fill: none;
  stroke: #8c8c8c;
`;

const MenuBar = styled.nav`
  display: flex;
  align-items: center;
  height: 20px;
  background: #f7f7f7;
`;

const MenuButton = styled.button`
  padding: 0 8px;
  line-height: 20px;
`;

const MenuSpace = styled.div`
  flex: 1;
`;

const ChildButton = styled.button`
  display: flex;
  align-items: center;
  justify-content: center;
  width: 18px;
  height: 18px;
  fill: none;
  stroke: #333;
`;

const ToolbarRow = styled.div`
  display: flex;
  height: 28px;
  overflow: hidden;
  background: #f7f7f7;
  border-top: 1px solid #e2e2e2;
`;

const ToolGroup = styled.div`
  display: flex;
  align-items: center;
  flex: ${props => (props.$last ? "1" : "none")};
  padding-bottom: 2px;
  border-left: 1px solid #dadada;

  &:first-child {
    border-left: none;
  }
`;

const Grip = styled.span`
  flex: none;
  width: 3px;
  height: 20px;
  margin: 0 2px 0 5px;
  background: repeating-linear-gradient(#c4c4c4 0 2px, transparent 2px 4px) 0 0 / 2px 100% no-repeat;

  ${ToolGroup}:first-child > & {
    margin-left: 4px;
  }
`;

const Separator = styled.span`
  flex: none;
  width: 1px;
  height: 18px;
  margin: 0 3px;
  background: #d0d0d0;
`;

const ToolButton = styled.button`
  display: flex;
  align-items: center;
  justify-content: center;
  flex: none;
  width: 26px;
  height: 24px;
  border: 1px solid transparent;

  ${props => props.$active && css`
    background: #c7e2f8;
    border-color: #92c9f5;
  `}
`;

const ArrowButton = styled.button`
  display: flex;
  align-items: center;
  justify-content: center;
  flex: none;
  width: 12px;
  height: 24px;
`;

const MoreButton = styled.button`
  width: 14px;
  height: 24px;
  font-size: 14px;
  color: #555;

  ${ToolGroup}:last-child & {
    margin-left: auto;
  }
`;

const Combo = styled.div`
  position: relative;
  display: flex;
  align-items: center;
  flex: none;
  width: ${props => props.$width}px;
  height: 20px;
  margin-left: 1px;
  padding-left: 5px;
  background: #e6e6f1;
`;

const Swatch = styled.span`
  flex: none;
  width: 11px;
  height: 11px;
  margin-right: 3px;
  background: ${props => props.$color};
`;

const ActionTag = styled.span`
  width: 30px;
  line-height: 13px;
  text-align: center;
  background: #9bbb59;
`;

const CaseNumber = styled.span`
  width: 35px;
  margin-right: 4px;
  padding-left: 5px;
  line-height: 16px;
  border-right: 1px solid #f7f7f7;
`;

const ComboSelect = styled.select`
  flex: 1;
  height: 20px;
  padding: 0 0 0 2px;
  appearance: none;
`;

const ChevronSvg = styled.svg`
  position: absolute;
  right: 4px;
  top: 7px;
  pointer-events: none;
`;

const StepButton = styled.button`
  display: flex;
  align-items: center;
  justify-content: center;
  flex: none;
  width: 15px;
  height: 20px;
  margin-left: 1px;
  background: #e6e6f1;
`;

const Viewport = styled.main`
  position: relative;
  display: flex;
  flex: 1;
  justify-content: space-between;
  align-items: flex-start;
  min-height: 760px;
  background: #fff;
`;

const SceneSvg = styled.svg`
  position: absolute;
  inset: 0;
  width: 100%;
  height: 100%;
`;

const ViewCaption = styled.div`
  position: relative;
  padding: 4px 5px;
  font-size: 12px;
  line-height: 17px;
`;

const ViewOverlay = styled.div`
  position: relative;
  display: flex;
  flex-direction: column;
  align-items: flex-end;
  gap: 43px;
  padding: 26px 22px 0 0;
`;

const CubeSvg = styled.svg`
  margin-right: -4px;
`;

const CubeText = styled.text`
  font: bold 13px "Liberation Sans", sans-serif;
  text-anchor: middle;
`;

const ValueText = styled.text`
  font-size: 11px;
  fill: #f06060;
`;

const SectionText = styled.text`
  font: 11px "Liberation Sans", sans-serif;
  fill: #8f9494;
`;

const Panel = styled.aside`
  width: 284px;
  box-shadow: 0 4px 16px rgba(0, 0, 0, 0.38);
`;

const PanelHeader = styled.div`
  display: flex;
  align-items: center;
  justify-content: space-between;
  height: 31px;
  padding: 0 1px 0 8px;
  color: #fff;
  background: #0078d7;
`;

const PanelTitle = styled.span`
  padding-bottom: 2px;
`;

const PanelClose = styled.button`
  display: flex;
  align-items: center;
  justify-content: center;
  width: 19px;
  height: 19px;
  margin-top: 2px;
  background: #c75050;
`;

const PanelBody = styled.div`
  display: flex;
  flex-direction: column;
  background: #fff;
  border: 1px solid #c8c8d2;
  border-width: 0 1px;
`;

const PanelCaption = styled.div`
  padding: 0 10px 6px;
  line-height: 22px;
`;

const Tree = styled.ul`
  height: 449px;
  margin: 0;
  padding: 0;
  overflow: hidden;
  list-style: none;
  line-height: 16px;
  white-space: nowrap;
  background: linear-gradient(#e0e0e0, #e0e0e0) 0 0 / 14px 100% no-repeat;
`;

const TreeHead = styled.div`
  position: relative;
  height: 16px;
  padding-left: 15px;
  background: ${props => (props.$light ? "#e8e8e8" : "#e0e0e0")};
  outline: ${props => (props.$selected ? "1px dotted #000" : "none")};
  outline-offset: -1px;
`;

const Expander = styled.button`
  position: absolute;
  left: 2px;
  top: 3px;
  width: 9px;
  height: 9px;
  background: #fff;
  box-shadow: inset 0 0 0 1px #848484;
`;

const TreeItems = styled.ul`
  margin: 0 0 0 14px;
  padding: 0 0 ${props => (props.$gap ? "16px" : "0")};
  list-style: none;
  background: #fff;
`;

const TreeItem = styled.li`
  display: flex;
  height: 16px;
  padding-left: 11px;
  background: #f9f9f4;
`;

const TreeSwatch = styled.span`
  flex: none;
  width: 11px;
  height: 11px;
  margin: 1px 5px 0 0;
  background: ${props => props.$color};
`;

const PanelActions = styled.div`
  display: flex;
  justify-content: flex-end;
  gap: 6px;
  padding: 5px 6px 6px;
`;

const PanelAction = styled.button`
  display: flex;
  align-items: center;
  justify-content: center;
  width: 25px;
  height: 21px;
  background: #cce4f7;
`;

const PanelTabs = styled.div`
  display: flex;
  height: 26px;
`;

const PanelTab = styled.button`
  display: flex;
  align-items: center;
  justify-content: center;
  width: 39px;
  background: #fff;
  border: 1px solid #c8c8d2;
  border-width: 0 0 1px 1px;
`;

const TabFill = styled.div`
  flex: 1;
  background: #f7f7f7;
  border: 1px solid #c8c8d2;
  border-width: 1px 0 0 1px;
`;

const StatusBar = styled.footer`
  display: flex;
  align-items: center;
  justify-content: flex-end;
  height: 23px;
  white-space: nowrap;
  background: #f7f7f7;
`;

const StatusToggle = styled.button`
  flex: none;
  width: ${props => props.$width}px;
  height: 19px;
  margin-right: 1px;
  background: ${props => (props.$on ? "#eeeeee" : "none")};
  border: 1px solid ${props => (props.$on ? "#c4c4c4" : "transparent")};
  border-width: 1px 0 0 1px;
`;

const StatusCell = styled.div`
  display: flex;
  align-items: center;
  flex: none;
  width: ${props => props.$width}px;
  height: 19px;
  padding-left: 4px;
  border-left: 1px solid #d4d4d4;
`;

export default App;
